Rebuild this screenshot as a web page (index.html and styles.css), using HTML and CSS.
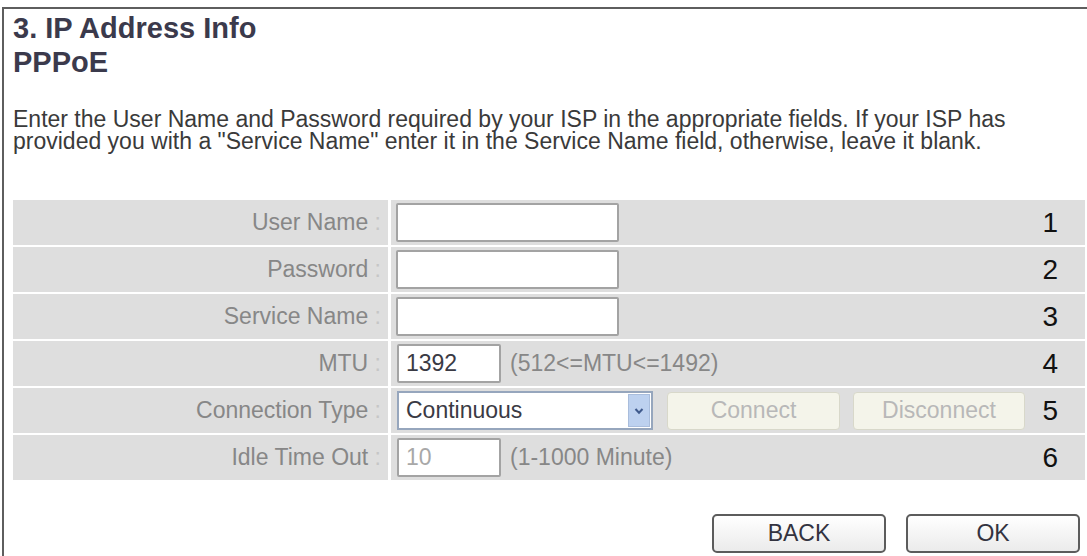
FILE: index.html
```html
<!DOCTYPE html>
<html lang="en">
<head>
<meta charset="utf-8">
<title>IP Address Info - PPPoE</title>
<link rel="stylesheet" href="styles.css">
</head>
<body>
<div class="frame">
  <h1 class="title">3. IP Address Info<br>PPPoE</h1>
  <p class="desc">Enter the User Name and Password required by your ISP in the appropriate fields. If your ISP has provided you with a "Service Name" enter it in the Service Name field, otherwise, leave it blank.</p>

  <div class="form">
    <div class="label">User Name <span class="colon">:</span></div>
    <div class="value">
      <input class="field field-wide" type="text">
      <span class="num">1</span>
    </div>

    <div class="label">Password <span class="colon">:</span></div>
    <div class="value">
      <input class="field field-wide" type="password">
      <span class="num">2</span>
    </div>

    <div class="label">Service Name <span class="colon">:</span></div>
    <div class="value">
      <input class="field field-wide" type="text">
      <span class="num">3</span>
    </div>

    <div class="label">MTU <span class="colon">:</span></div>
    <div class="value">
      <input class="field field-short" type="text" value="1392">
      <span class="hint">(512&lt;=MTU&lt;=1492)</span>
      <span class="num">4</span>
    </div>

    <div class="label">Connection Type <span class="colon">:</span></div>
    <div class="value">
      <div class="select">
        <span class="select-text">Continuous</span>
        <span class="select-arrow">
          <svg width="10" height="8" viewBox="0 0 10 8"><path d="M1.5 2 L5 5.8 L8.5 2" fill="none" stroke="#3f5a8c" stroke-width="2"/></svg>
        </span>
      </div>
      <button class="btn-off btn-connect" disabled>Connect</button>
      <button class="btn-off btn-disconnect" disabled>Disconnect</button>
      <span class="num">5</span>
    </div>

    <div class="label">Idle Time Out <span class="colon">:</span></div>
    <div class="value">
      <input class="field field-short field-dim" type="text" value="10">
      <span class="hint">(1-1000 Minute)</span>
      <span class="num">6</span>
    </div>
  </div>

  <div class="actions">
    <button class="btn">BACK</button>
    <button class="btn">OK</button>
  </div>
</div>
</body>
</html>
```

FILE: styles.css
```css
html, body {
  margin: 0;
  padding: 0;
  background: #ffffff;
}

body {
  font-family: "Liberation Sans", Arial, sans-serif;
  width: 1087px;
  height: 556px;
  overflow: hidden;
}

.frame {
  margin: 7px 0 0 2px;
  border-left: 2px solid #5e5e5e;
  border-top: 2px solid #5e5e5e;
  padding: 2px 7px 0 9px;
  height: 560px;
  box-sizing: border-box;
}

.title {
  margin: 0;
  font-size: 29px;
  line-height: 34px;
  font-weight: bold;
  color: #3b3a4c;
}

.desc {
  margin: 29px 0 0 0;
  font-size: 23px;
  line-height: 22px;
  color: #3a3a3a;
}

.form {
  margin-top: 48px;
  display: grid;
  grid-template-columns: 375px 1fr;
  grid-auto-rows: 45px;
  row-gap: 2px;
  column-gap: 3px;
  background: #ffffff;
  margin-right: -5px;
}

.label {
  background: #dedede;
  display: flex;
  align-items: center;
  justify-content: flex-end;
  padding-right: 7px;
  font-size: 23px;
  color: #878787;
  white-space: pre;
}

.colon {
  color: #c6c6c6;
}

.value {
  background: #dedede;
  display: flex;
  align-items: center;
  padding-left: 5px;
}

.field {
  box-sizing: border-box;
  height: 39px;
  border: 2px solid #a3a3a3;
  border-radius: 2px;
  background: #ffffff;
  font-family: "Liberation Sans", Arial, sans-serif;
  font-size: 23px;
  color: #3a3a44;
  padding: 0 7px;
  margin: 0;
  outline: none;
}

.field-wide {
  width: 223px;
}

.field-short {
  width: 104px;
  margin-left: 1px;
}

.field-dim {
  color: #a8a8a8;
}

.hint {
  margin-left: 9px;
  font-size: 23px;
  color: #878787;
}

.num {
  margin-left: auto;
  margin-right: 27px;
  font-size: 28px;
  color: #111111;
}

.select {
  box-sizing: border-box;
  width: 256px;
  height: 39px;
  margin-left: 1px;
  border: 2px solid #96a6bd;
  background: #ffffff;
  display: flex;
  align-items: center;
}

.select-text {
  flex: 1;
  padding-left: 7px;
  font-size: 23px;
  color: #3a3a44;
}

.select-arrow {
  width: 22px;
  height: 33px;
  margin-right: 1px;
  background: #bdd1ef;
  border: 1px solid #a9bddc;
  box-sizing: border-box;
  display: flex;
  align-items: center;
  justify-content: center;
}

.btn-off {
  box-sizing: border-box;
  height: 38px;
  border: 1px solid #d8d8ca;
  border-radius: 4px;
  background: #f4f4ea;
  font-family: "Liberation Sans", Arial, sans-serif;
  font-size: 23px;
  color: #b8b8b8;
  padding: 0;
}

.btn-connect {
  width: 173px;
  margin-left: 14px;
}

.btn-disconnect {
  width: 172px;
  margin-left: 13px;
}

.actions {
  margin-top: 34px;
  display: flex;
  justify-content: flex-end;
  gap: 20px;
}

.btn {
  box-sizing: border-box;
  width: 174px;
  height: 39px;
  border: 2px solid #5c5c5c;
  border-radius: 5px;
  background: linear-gradient(#ffffff, #ebebeb);
  font-family: "Liberation Sans", Arial, sans-serif;
  font-size: 23px;
  color: #333340;
  padding: 0;
}
```
